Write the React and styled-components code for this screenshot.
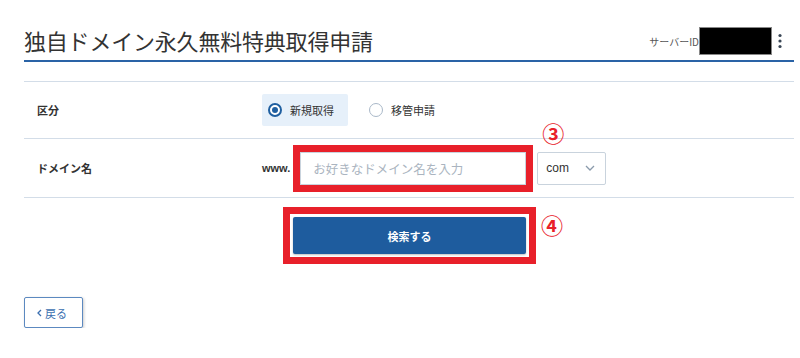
import React from "react";
import styled, { createGlobalStyle } from "styled-components";

const GlobalStyle = createGlobalStyle`
  html, body {
    margin: 0;
    padding: 0;
    background: #fff;
  }
  body {
    font-family: "Noto Sans CJK JP", "Noto Sans", "Liberation Sans", sans-serif;
    color: #333;
  }
`;

const Page = styled.div`
  width: 770px;
  margin-left: 24px;
`;

const Header = styled.header`
  display: flex;
  align-items: center;
  justify-content: space-between;
  height: 40px;
  padding-top: 20px;
  border-bottom: 2px solid #2a63a6;
`;

const Title = styled.h1`
  margin: 0;
  font-size: 22px;
  font-weight: 400;
  color: #333;
  letter-spacing: -0.2px;
`;

const ServerInfo = styled.div`
  display: flex;
  align-items: center;
  padding-right: 12px;
  padding-top: 2px;
`;

const ServerLabel = styled.span`
  font-size: 10px;
  color: #555;
`;

const Masked = styled.span`
  display: block;
  width: 71px;
  height: 26px;
  background: #000;
  border: 1px solid #888;
`;

const Kebab = styled.svg`
  margin-left: 6px;
`;

const Table = styled.div`
  margin-top: 19px;
  border-top: 1px solid #d3dde8;
`;

const Row = styled.div`
  display: grid;
  grid-template-columns: 238px 1fr;
  align-items: center;
  height: ${(p) => p.$h}px;
  border-bottom: 1px solid #d3dde8;
`;

const Label = styled.div`
  padding-left: 13px;
  font-size: 11px;
  font-weight: 700;
  color: #333;
`;

const Value = styled.div`
  display: flex;
  align-items: center;
`;

const RadioGroup = styled.div`
  display: flex;
  align-items: center;
  gap: 15px;
`;

const RadioOption = styled.label`
  display: flex;
  align-items: center;
  gap: 8px;
  height: 32px;
  padding: 0 14px 0 6px;
  border-radius: 2px;
  background: ${(p) => (p.$checked ? "#e6f0fa" : "transparent")};
  font-size: 11px;
  color: #333;
`;

const RadioCircle = styled.span`
  position: relative;
  box-sizing: border-box;
  width: 14px;
  height: 14px;
  border-radius: 50%;
  border: ${(p) => (p.$checked ? "2px solid #1f5fa0" : "1.5px solid #a9b8c8")};
  background: #fff;
  &::after {
    content: "";
    display: ${(p) => (p.$checked ? "block" : "none")};
    position: absolute;
    left: 2px;
    top: 2px;
    width: 6px;
    height: 6px;
    border-radius: 50%;
    background: #1f5fa0;
  }
`;

const Www = styled.span`
  font-size: 11px;
  font-weight: 700;
  color: #333;
  margin-right: 10px;
  font-family: "Liberation Sans", sans-serif;
`;

const InputWrap = styled.div`
  position: relative;
`;

const TextInput = styled.input`
  display: block;
  box-sizing: border-box;
  width: 226px;
  height: 33px;
  padding: 0 12px;
  border: 1px solid #c9d3dd;
  border-radius: 0;
  outline: 7px solid #e8202a;
  font-family: inherit;
  font-size: 12.5px;
  color: #333;
  &::placeholder {
    color: #aab4c0;
  }
`;

const Annotation = styled.span`
  position: absolute;
  left: calc(100% + ${(p) => p.$dx}px);
  top: ${(p) => p.$dy}px;
  font-size: 22px;
  font-weight: 700;
  color: #e8202a;
  line-height: 1;
`;

const Select = styled.div`
  box-sizing: border-box;
  display: flex;
  align-items: center;
  justify-content: space-between;
  width: 69px;
  height: 33px;
  margin-left: 11px;
  padding: 0 10px 0 8px;
  border: 1px solid #c9d3dd;
  border-radius: 2px;
  font-size: 12px;
  font-family: "Liberation Sans", sans-serif;
  color: #333;
`;

const ButtonArea = styled.div`
  display: flex;
  justify-content: center;
  margin-top: 9px;
  padding-left: 1px;
`;

const ButtonFrame = styled.div`
  position: relative;
  padding: 3px;
  border: 7px solid #e8202a;
`;

const SearchButton = styled.button`
  display: block;
  width: 233px;
  height: 37px;
  border: none;
  border-radius: 2px;
  background: #1e5c9e;
  color: #fff;
  font-family: inherit;
  font-size: 11px;
  font-weight: 700;
  box-shadow: 0 1px 2px rgba(0, 0, 0, 0.25);
`;

const BackButton = styled.button`
  display: flex;
  align-items: center;
  gap: 3px;
  margin-top: 33px;
  width: 59px;
  height: 31px;
  padding: 0 0 0 12px;
  background: #fff;
  border: 1px solid #5c89c0;
  border-radius: 2px;
  box-shadow: 1px 1px 3px rgba(0, 0, 0, 0.2);
  color: #3b6fb0;
  font-family: inherit;
  font-size: 11px;
`;

function Radio({ checked, children }) {
  return (
    <RadioOption $checked={checked}>
      <RadioCircle $checked={checked} />
      {children}
    </RadioOption>
  );
}

export default function App() {
  return (
    <>
      <GlobalStyle />
      <Page>
        <Header>
          <Title>独自ドメイン永久無料特典取得申請</Title>
          <ServerInfo>
            <ServerLabel>サーバーID</ServerLabel>
            <Masked />
            <Kebab width="4" height="16" viewBox="0 0 4 16">
              <circle cx="2" cy="2.5" r="1.6" fill="#3a4756" />
              <circle cx="2" cy="8" r="1.6" fill="#3a4756" />
              <circle cx="2" cy="13.5" r="1.6" fill="#3a4756" />
            </Kebab>
          </ServerInfo>
        </Header>

        <Table>
          <Row $h={56}>
            <Label>区分</Label>
            <Value>
              <RadioGroup>
                <Radio checked>新規取得</Radio>
                <Radio>移管申請</Radio>
              </RadioGroup>
            </Value>
          </Row>
          <Row $h={58}>
            <Label>ドメイン名</Label>
            <Value>
              <Www>www.</Www>
              <InputWrap>
                <TextInput placeholder="お好きなドメイン名を入力" />
                <Annotation $dx={16} $dy={-31}>③</Annotation>
              </InputWrap>
              <Select>
                <span>com</span>
                <svg width="10" height="6" viewBox="0 0 10 6">
                  <path d="M1 1l4 4 4-4" fill="none" stroke="#8a9aab" strokeWidth="1.3" />
                </svg>
              </Select>
            </Value>
          </Row>
        </Table>

        <ButtonArea>
          <ButtonFrame>
            <SearchButton>検索する</SearchButton>
            <Annotation $dx={12} $dy={-1}>④</Annotation>
          </ButtonFrame>
        </ButtonArea>

        <BackButton>
          <svg width="5" height="8" viewBox="0 0 5 8">
            <path d="M4 1L1 4l3 3" fill="none" stroke="#3b6fb0" strokeWidth="1.3" />
          </svg>
          戻る
        </BackButton>
      </Page>
    </>
  );
}
